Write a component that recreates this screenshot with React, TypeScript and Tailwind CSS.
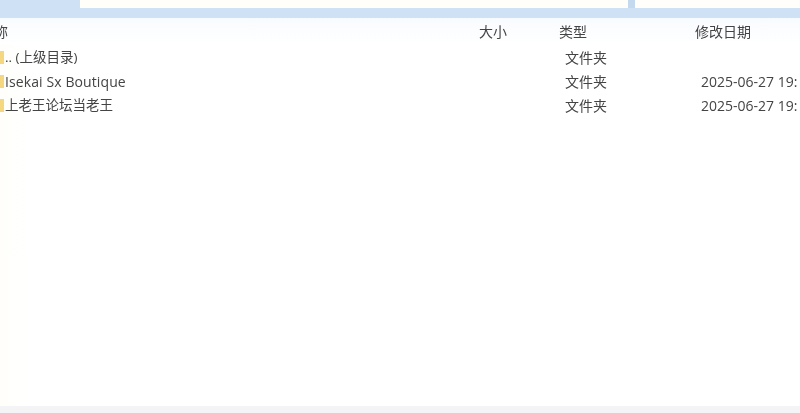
import React from "react";

const font = "font-['Open_Sans','Noto_Sans_CJK_SC',sans-serif]";

const rows = [
  { name: ".. (上级目录)", nameClass: "text-[13.5px]", type: "文件夹", date: "" },
  { name: "Isekai Sx Boutique", nameClass: "tracking-[0.1px]", type: "文件夹", date: "2025-06-27 19:" },
  { name: "上老王论坛当老王", nameClass: "text-[13.5px]", type: "文件夹", date: "2025-06-27 19:" },
];

const App: React.FC = () => {
  return (
    <div className={`${font} w-[800px] h-[413px] overflow-hidden flex flex-col bg-white text-[14px] text-[#444]`}>
      {/* Address bar + search box, cut off at the top */}
      <div className="h-[18px] shrink-0 bg-[#cfe2f5] blur-[0.5px]">
        <div className="h-[8px] flex">
          <div className="w-[80px] bg-[#cfe2f5]" />
          <div className="w-[548px] bg-[#fffef9]" />
          <div className="w-[7px] bg-[#c4d8ee]" />
          <div className="flex-1 bg-[#fffefb]" />
        </div>
      </div>

      {/* Column headers */}
      <div className="h-[27px] shrink-0 flex items-center bg-gradient-to-b from-[#f8fbfe] to-white blur-[0.5px]">
        <div className="w-[479px]">
          <span className="block -ml-[6px]">称</span>
        </div>
        <div className="w-[80px]">大小</div>
        <div className="w-[136px]">类型</div>
        <div className="flex-1">修改日期</div>
      </div>

      {/* File rows */}
      <div className="flex-1 bg-gradient-to-r from-[#fffefa] to-white to-[30px] blur-[0.5px]">
        {rows.map((row) => (
          <div key={row.name} className="h-[24px] flex items-center whitespace-nowrap">
            <div className="w-[4px] h-[13px] bg-[#f5d77f] shrink-0" />
            <div className={`w-[561px] pl-[1px] ${row.nameClass}`}>{row.name}</div>
            <div className="w-[136px]">{row.type}</div>
            <div className="flex-1 overflow-hidden">{row.date}</div>
          </div>
        ))}
      </div>

      {/* Status bar, mostly out of frame */}
      <div className="h-[7px] shrink-0 bg-[#f4f4f6]" />
    </div>
  );
};

export default App;
